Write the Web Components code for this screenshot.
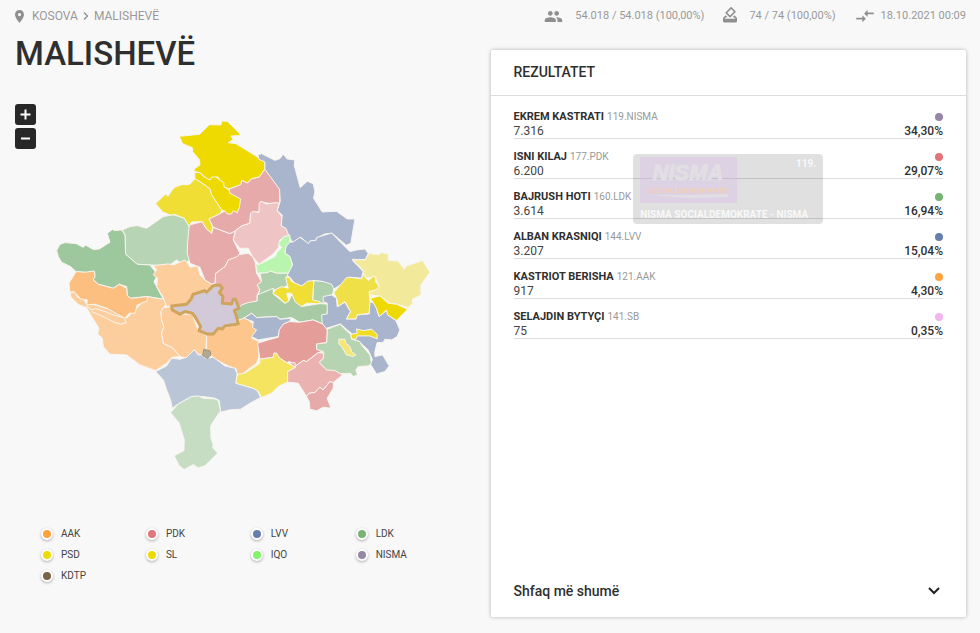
<!DOCTYPE html>
<html lang="sq">
<head>
<meta charset="utf-8">
<title>Malishevë – Rezultatet</title>
<style>
  html { height: 100%; }
  body { margin: 0; min-height: 100%; display: flex; background: #f8f8f8; color: #2f2f2f; font-family: Roboto, "Liberation Sans", sans-serif; font-size: 12px; }
</style>
</head>
<body>
<results-page></results-page>

<template id="t-page">
  <style>
    :host { flex: 1; display: flex; flex-direction: column; padding: 0 14px 16px 15px; min-width: 0; }
    main { flex: 1; display: grid; grid-template-columns: 1fr 1fr; }
    section { padding-right: 50px; }
    h1 { margin: 0 0 30px; font-size: 33px; line-height: 40px; font-weight: 500; }
    .map { display: flex; gap: 9px; margin-bottom: 52px; }
    region-map { flex: 1; }
  </style>
  <page-header></page-header>
  <main>
    <section>
      <h1>MALISHEVË</h1>
      <div class="map"><zoom-controls></zoom-controls><region-map></region-map></div>
      <party-legend></party-legend>
    </section>
    <results-card></results-card>
  </main>
</template>

<template id="t-header">
  <style>
    :host { display: flex; justify-content: space-between; padding: 6px 0 8px; line-height: 20px; color: #999; }
    nav, .stats, .stats span { display: flex; align-items: center; }
    nav { gap: 5px; }
    .stats { gap: 19px; font-size: 11px; }
    .stats span { gap: 12px; }
    .stats span:last-child { gap: 6px; }
    a { color: inherit; text-decoration: none; }
    svg { display: block; fill: #8f8f8f; }
    .pin { margin-right: 3px; }
  </style>
  <nav aria-label="Vendndodhja">
    <svg class="pin" width="9" height="13" viewBox="5 2 14 20" aria-hidden="true"><path d="M12 2C8.100 2 5 5.100 5 9c0 5.250 7 13 7 13s7-7.750 7-13c0-3.900-3.100-7-7-7zm0 9.500a2.500 2.500 0 1 1 0-5 2.500 2.500 0 0 1 0 5z"/></svg>
    <a href="#kosova">KOSOVA</a>
    <svg width="6" height="8" viewBox="0 0 6 8" aria-hidden="true"><path d="M1 0.500 4.500 4 1 7.500" fill="none" stroke="#8f8f8f" stroke-width="1.300"/></svg>
    <a href="#malisheve">MALISHEVË</a>
  </nav>
  <div class="stats">
    <span><svg width="19" height="19" viewBox="0 0 24 24" aria-hidden="true"><path d="M16 11c1.660 0 2.990-1.340 2.990-3S17.660 5 16 5s-3 1.340-3 3 1.340 3 3 3zm-8 0c1.660 0 2.990-1.340 2.990-3S9.660 5 8 5 5 6.340 5 8s1.340 3 3 3zm0 2c-2.330 0-7 1.170-7 3.500V19h14v-2.500C15 14.170 10.330 13 8 13zm8 0c-.29 0-.62.020-.97.050 1.160.84 1.970 1.970 1.970 3.450V19h6v-2.500c0-2.330-4.670-3.500-7-3.500z"/></svg>54.018 / 54.018 (100,00%)</span>
    <span><svg width="14" height="18" viewBox="3 2 18 23" aria-hidden="true"><path d="M18 13h-.68l-2 2h1.910L19 17H5l1.780-2h2.050l-2-2H6l-3 3v4c0 1.100.89 2 1.990 2H19a2 2 0 0 0 2-2v-4l-3-3zm-1-5.050-4.950 4.950-3.540-3.540 4.950-4.950L17 7.950zm-4.240-5.660L6.390 8.660a1 1 0 0 0 0 1.410l4.950 4.950c.39.39 1.020.39 1.410 0l6.360-6.360a1 1 0 0 0 0-1.410L14.160 2.300a.98.98 0 0 0-1.400-.01z"/></svg>74 / 74 (100,00%)</span>
    <span><svg width="20" height="14" viewBox="1 4 22 16" aria-hidden="true"><path d="M9.010 14H2v2h7.010v3L13 15l-3.990-4v3zm5.980-1v-3H22V8h-7.010V5L11 9l3.990 4z"/></svg>18.10.2021 00:09</span>
  </div>
</template>

<template id="t-zoom">
  <style>
    :host { display: flex; flex-direction: column; gap: 3px; width: 21px; }
    button { display: flex; align-items: center; justify-content: center; height: 21px; padding: 0; border: 0; border-radius: 3px; background: #282828; }
    svg { display: block; stroke: #fff; stroke-width: 2; fill: none; }
  </style>
  <button type="button" aria-label="Zmadho"><svg width="11" height="11" viewBox="0 0 11 11"><path d="M0.500 5.500h10M5.500 0.500v10"/></svg></button>
  <button type="button" aria-label="Zvogëlo"><svg width="11" height="11" viewBox="0 0 11 11"><path d="M1 5.500h9"/></svg></button>
</template>

<template id="t-map">
  <style>
    :host { display: block; min-width: 0; }
    svg { display: block; width: 100%; height: auto; stroke: #f8f5ee; stroke-width: 3; stroke-linejoin: round; }
  </style>
  <svg viewBox="135 312 1187 1110" role="img" aria-label="Harta e komunave">
    <g transform="translate(150 615)">
      <path fill="#b7d5b4" d="M217 75 240 65 262 62 290 70 340 35 370 29 403 40 418 64 418 100 412 120 418 150 432 165 415 168 400 180 380 165 355 183 300 180 262 178 227 148 225 90z"/>
      <path fill="#9dc79c" d="M20 137 30 118 45 113 78 116 100 127 107 120 130 134 148 132 180 112 172 85 188 73 192 77 215 75 225 90 227 148 262 178 300 180 323 210 312 230 340 283 292 275 242 280 232 272 230 245 208 238 190 250 145 238 130 225 135 205 78 200 62 185 35 172 25 155z"/>
    </g>
    <g transform="translate(255 780)">
      <path fill="#fdce9d" d="M-45 100 -30 95 -22 112 -5 118 5 132 25 134 75 148 100 160 125 175 160 140 187 110 235 118 245 130 235 145 228 155 230 180 237 200 230 220 235 250 265 265 287 290 262 292 245 310 212 332 165 315 125 285 75 283 55 260 52 235 38 222 42 205 20 170 5 143 -20 134 -42 112z"/>
      <path fill="none" d="M5 138 20 150 32 146 60 155 85 165 112 172 118 168M20 155 50 168 90 188 110 193 124 188 118 178"/>
      <path fill="#fdcd9c" d="M205 17 250 12 265 15 300 0 310 12 315 22 338 18 345 45 360 60 380 72 385 80 360 92 325 103 305 133 260 138 245 140 235 113 215 80 218 55 205 45 215 30z"/>
      <path fill="#fccc9a" d="M235 143 262 140 262 150 285 163 322 163 340 212 365 228 363 268 350 292 328 270 305 295 285 290 265 265 235 250 230 220 237 200 230 180 228 155z"/>
      <path fill="#fdc68d" d="M365 228 365 215 390 220 405 205 460 195 465 165 478 172 510 195 515 215 500 235 522 245 522 290 515 310 490 328 470 345 455 342 455 328 430 318 385 295 365 270z"/>
      <path fill="#ebb2b2" d="M385 75 390 70 392 40 420 20 430 0 455 -15 490 -20 503 -10 512 10 515 40 530 65 517 75 525 90 517 105 517 123 490 140 462 140 452 118 440 132 412 130 412 110 403 98 410 80 400 73z"/>
    </g>
    <path fill="#fdbf80" transform="translate(150 615)" d="M78 200 105 202 133 198 135 215 130 225 145 238 190 250 208 238 230 250 232 272 242 280 292 275 292 288 262 300 255 325 238 325 225 340 170 310 135 298 110 300 112 285 92 282 72 260 60 262 57 235z"/>
    <g transform="translate(450 330)">
      <path fill="#e7aaaa" d="M118 345 157 335 168 355 185 370 190 352 240 371 257 362 250 390 270 430 262 440 235 450 225 470 197 490 195 520 185 522 165 510 150 472 120 460 112 430 113 400z"/>
      <path fill="#e7aaaa" d="M237 237 272 224 276 211 293 219 305 206 328 201 345 177 389 231 390 280 355 280 331 275 328 305 302 310 300 340 275 348 257 362 240 371 190 352 177 327 210 311 225 303 240 295 240 250z"/>
      <path fill="#eed900" d="M88 79 149 73 178 44 213 45 216 33 232 34 270 71 270 77 243 78 250 88 235 98 258 101 345 155 345 177 328 201 305 206 293 219 276 211 272 224 237 237 222 230 212 212 203 200 175 210 160 197 150 188 132 184 133 177 150 165 149 150 128 125 127 113 98 101z"/>
      <path fill="#f0de34" d="M135 206 158 220 180 236 186 256 205 284 216 301 210 311 177 327 188 350 185 370 168 355 157 335 125 336 118 349 103 325 75 314 60 315 38 306 17 281 47 252 54 259 72 233 95 224 118 224z"/>
      <path fill="#eed900" d="M134 188 150 188 162 200 180 210 186 201 198 201 212 212 222 218 222 230 237 240 240 250 272 267 268 294 262 308 250 302 245 312 232 312 225 303 216 301 205 284 186 256 180 236 158 220 135 206z"/>
    </g>
    <g transform="translate(750 420)">
      <path fill="#eec4c4" d="M2 220 10 214 27 218 28 190 34 184 50 192 78 188 88 190 82 212 97 232 94 257 108 265 118 286 90 300 86 322 70 342 27 373 8 350 -5 325 -30 325 -50 300 -43 272 -25 258 0 250z"/>
      <path fill="#a9b5cd" d="M24 45 35 41 75 61 90 56 100 43 112 57 135 60 133 76 151 143 172 124 190 131 195 155 191 175 217 216 260 214 292 237 315 237 303 310 289 316 247 280 225 282 200 295 198 304 181 303 176 314 153 292 130 310 118 290 108 265 94 257 97 225 82 212 91 184 89 148 45 88 45 66 27 58z"/>
    </g>
    <g transform="translate(720 675)">
      <path fill="#a9b5cd" d="M148 50 158 52 180 37 206 56 210 48 228 46 230 38 275 24 318 68 330 80 350 75 375 72 385 85 377 103 338 107 370 140 365 160 330 157 310 175 282 192 250 170 222 167 205 172 185 183 165 175 150 157 140 150 158 120 150 95 135 85 138 65z"/>
      <path fill="#b9f5ae" d="M150 30 130 36 125 45 115 55 125 68 110 85 105 95 55 120 47 115 52 145 85 143 90 138 110 145 145 145 158 120 150 95 135 85 138 65 150 52z"/>
      <path fill="#aed0ac" d="M60 145 85 143 90 138 110 145 145 145 140 160 150 175 130 190 100 195 75 200 52 215 60 195 52 180 65 170z"/>
      <path fill="#aed0ac" d="M222 167 250 170 275 178 282 192 278 208 255 218 258 235 218 232z"/>
      <path fill="#a8cba6" d="M-15 260 5 240 25 233 52 228 52 210 100 190 100 207 135 235 147 228 155 210 185 245 240 236 265 238 262 268 248 270 248 297 220 285 180 292 155 278 120 283 110 275 50 278 35 265 12 280 -5 285z"/>
      <path fill="#f0de34" d="M137 157 148 157 155 170 185 183 205 168 222 168 218 225 240 230 240 236 200 235 185 245 165 230 155 205 140 205 147 228 135 235 115 215 100 207 105 195 125 185 145 190z"/>
      <path fill="#a9b5cd" d="M12 280 35 265 50 278 110 275 120 283 155 280 148 290 130 298 118 318 115 335 85 340 55 345 35 335 50 315 38 308 40 290z"/>
    </g>
    <g transform="translate(960 720)">
      <path fill="#a9b5cd" d="M10 170 35 165 50 175 52 200 75 187 92 215 80 237 108 237 112 225 148 222 150 185 165 190 178 230 200 212 205 225 228 242 240 270 232 290 215 300 195 298 190 308 172 308 165 335 165 350 188 345 208 378 195 395 170 402 150 370 158 360 145 330 115 303 95 298 95 280 82 270 62 252 20 265 8 265 5 225 22 222 22 190 10 185z"/>
      <path fill="#f2e99b" d="M97 58 135 60 148 40 175 45 185 38 205 42 205 62 235 63 253 88 260 78 308 62 330 97 303 135 303 165 278 178 278 190 265 203 232 193 210 190 180 168 148 165 150 155 165 150 178 140 165 110 140 115 130 100 130 92z"/>
      <path fill="#f0e048" d="M42 158 80 113 90 112 125 117 130 103 145 122 160 110 168 112 167 125 178 140 168 150 148 155 150 185 148 220 112 225 108 237 80 237 92 215 75 185 55 200 52 180z"/>
      <path fill="#eed900" d="M152 175 180 168 205 190 230 193 263 208 230 242 203 225 200 210 178 230 170 205z"/>
      <path fill="#f0dc22" d="M92 283 112 280 110 267 130 272 155 268 172 283 172 297 150 288 112 288 108 298 95 297z"/>
      <path fill="#b6d4b2" d="M22 268 60 253 82 275 92 283 95 298 120 305 125 315 150 345 155 370 145 378 115 380 108 390 113 405 100 410 92 400 40 403 20 390 -2 368 10 355 10 335 -10 330 -10 312 20 308z"/>
      <path fill="#f3e674" d="M57 298 75 298 78 310 90 320 95 335 108 345 100 350 80 345 65 320 57 312z"/>
    </g>
    <g transform="translate(450 990)">
      <path fill="#e59d99" d="M323 40 355 30 385 22 388 0 400 -17 418 -25 450 -23 490 -30 518 -18 532 0 530 38 500 42 500 58 520 68 505 68 470 95 460 92 437 108 420 95 410 98 385 82 380 70 372 70 370 82 330 88z"/>
      <path fill="#ebb2b2" d="M415 100 435 98 437 108 460 92 470 95 505 68 522 70 520 85 508 98 530 120 555 122 578 135 550 158 540 155 520 180 510 172 495 188 478 190 470 200 445 160 413 157 413 125 437 112z"/>
      <path fill="#e7aaaa" d="M470 200 478 190 495 188 510 172 520 180 540 155 551 158 550 175 532 205 543 235 520 232 500 243 480 238 478 215z"/>
      <path fill="#bac6d8" d="M17 125 50 108 65 85 90 88 110 82 133 60 145 75 155 75 165 85 190 82 225 108 255 115 262 133 258 160 320 178 332 203 300 220 272 238 240 240 212 247 208 212 195 205 160 200 125 200 85 222 67 235 62 210 52 185 40 150z"/>
      <path fill="#c6dcc3" d="M62 248 85 222 125 200 145 198 160 205 195 207 205 212 212 243 190 275 182 290 183 325 190 345 188 352 203 370 165 408 145 414 130 404 103 419 88 408 73 378 102 362 103 330 88 280z"/>
      <path fill="#f4e45f" d="M262 133 285 130 330 100 330 88 370 82 372 70 380 70 390 85 410 98 437 112 413 125 413 157 385 170 365 190 335 203 325 185 310 175 258 160z"/>
      <path fill="#b2a894" stroke="#9c937c" d="M162 58 180 63 183 75 172 86 158 77z"/>
    </g>
    <path fill="#d2cad8" stroke="#cfa45c" stroke-width="9" transform="translate(255 780)" d="M260 138 305 133 318 118 325 103 360 92 365 97 385 77 405 75 412 85 403 98 414 110 412 130 440 132 445 118 452 118 462 145 448 152 455 170 460 192 420 198 412 207 400 205 385 222 365 222 342 212 347 200 330 170 322 160 300 155 285 163 262 150z"/>
  </svg>
</template>

<template id="t-legend">
  <style>
    :host { display: block; margin-left: 26px; }
    ul { display: grid; grid-template-columns: repeat(4, 1fr); row-gap: 5px; list-style: none; margin: 0 -20px 0 0; padding: 0; }
  </style>
  <ul></ul>
</template>

<template id="t-legend-item">
  <style>
    :host { display: flex; align-items: center; gap: 8px; font-size: 10px; line-height: 16px; color: #444; }
    i { box-sizing: border-box; width: 12px; height: 12px; border: 2px solid #fff; border-radius: 50%; background: var(--dot); box-shadow: 0 1px 3px rgba(0,0,0,.3); }
  </style>
  <i></i><slot></slot>
</template>

<template id="t-card">
  <style>
    :host { position: relative; display: flex; flex-direction: column; margin-top: 16px; background: #fff; border-radius: 2px; box-shadow: 0 0 4px rgba(0,0,0,.28); }
    h2 { margin: 0; padding: 12px 23px 13px; border-bottom: 1px solid #ddd; font-size: 14px; line-height: 20px; font-weight: 500; }
    .rows { flex: 1; padding: 3px 23px 0; }
    button { display: flex; justify-content: space-between; align-items: center; padding: 16px 26px 16px 23px; border: 0; background: none; color: inherit; font: 500 14px/20px Roboto, "Liberation Sans", sans-serif; }
    party-tooltip { position: absolute; left: 30%; top: 104px; }
  </style>
  <h2>REZULTATET</h2>
  <div class="rows"></div>
  <button type="button">Shfaq më shumë <svg width="12" height="8" viewBox="0 0 12 8" aria-hidden="true"><path d="M1 1l5 5 5-5" fill="none" stroke="#222" stroke-width="2"/></svg></button>
  <party-tooltip></party-tooltip>
</template>

<template id="t-row">
  <style>
    :host { display: grid; grid-template-columns: 1fr auto; grid-template-rows: 15px 14px; align-items: center; padding-top: 10px; border-bottom: 1px solid #ddd; line-height: 14px; }
    b { font-size: 11px; font-weight: 700; }
    small { font-size: 10px; color: #999; }
    i { justify-self: end; width: 8px; height: 8px; border-radius: 50%; background: var(--dot); }
    .votes { color: #444; }
    .share { font-weight: 500; }
  </style>
  <div><b><slot></slot></b> <small></small></div><i></i>
  <span class="votes"></span><span class="share"></span>
</template>

<template id="t-tooltip">
  <style>
    :host { box-sizing: border-box; display: grid; grid-template-columns: auto 1fr; width: 190px; padding: 3px 7px 2px; border-radius: 4px; background: rgba(0,0,0,.12); color: rgba(255,255,255,.8); font-size: 10px; font-weight: 700; }
    .logo { width: 97px; height: 46px; display: block; background: rgba(214,190,232,.4); }
    .no { justify-self: end; line-height: 14px; }
    .name { grid-column: 1 / 3; padding-top: 4px; line-height: 15px; white-space: nowrap; }
  </style>
  <svg class="logo" viewBox="0 0 97 46" role="img" aria-label="NISMA">
    <text x="48" y="23" text-anchor="middle" font-family="Liberation Sans, sans-serif" font-weight="700" font-style="italic" font-size="22" fill="#e2dfe4" stroke="#e2dfe4">NISMA</text>
    <text x="48" y="36" text-anchor="middle" font-family="Liberation Sans, sans-serif" font-weight="700" font-style="italic" font-size="8" fill="#f1cdb4">SOCIALDEMOKRATE</text>
    <path d="M10 38h40l38-1v3L50 41z" fill="#e2dfe4"/>
  </svg>
  <span class="no">119.</span>
  <span class="name">NISMA SOCIALDEMOKRATE - NISMA</span>
</template>

<script>
  const stamp = (host, id) => {
    const root = host.attachShadow({ mode: 'open' });
    root.append(document.getElementById(id).content.cloneNode(true));
    return root;
  };
  const simple = (name, id) => customElements.define(name, class extends HTMLElement {
    constructor() { super(); stamp(this, id); }
  });

  simple('party-tooltip', 't-tooltip');
  simple('zoom-controls', 't-zoom');
  simple('region-map', 't-map');
  simple('page-header', 't-header');
  simple('legend-item', 't-legend-item');

  customElements.define('result-row', class extends HTMLElement {
    constructor() { super(); this.root = stamp(this, 't-row'); }
    connectedCallback() {
      this.root.querySelector('small').textContent = this.getAttribute('party');
      this.root.querySelector('.votes').textContent = this.getAttribute('votes');
      this.root.querySelector('.share').textContent = this.getAttribute('share');
    }
  });

  customElements.define('party-legend', class extends HTMLElement {
    constructor() {
      super();
      const list = stamp(this, 't-legend').querySelector('ul');
      for (const [label, color] of [
        ['AAK', '#ffa341'], ['PDK', '#e0757a'], ['LVV', '#657eac'], ['LDK', '#77b372'],
        ['PSD', '#eedb0a'], ['SL', '#eed900'], ['IQO', '#84f26c'], ['NISMA', '#9787a7'], ['KDTP', '#776345']
      ]) {
        const li = document.createElement('li');
        const item = document.createElement('legend-item');
        item.style.setProperty('--dot', color);
        item.textContent = label;
        li.append(item);
        list.append(li);
      }
    }
  });

  customElements.define('results-card', class extends HTMLElement {
    constructor() {
      super();
      const rows = stamp(this, 't-card').querySelector('.rows');
      for (const [name, party, votes, share, color] of [
        ['EKREM KASTRATI', '119.NISMA', '7.316', '34,30%', '#9787a7'],
        ['ISNI KILAJ', '177.PDK', '6.200', '29,07%', '#e0757a'],
        ['BAJRUSH HOTI', '160.LDK', '3.614', '16,94%', '#77b372'],
        ['ALBAN KRASNIQI', '144.LVV', '3.207', '15,04%', '#657eac'],
        ['KASTRIOT BERISHA', '121.AAK', '917', '4,30%', '#ffa341'],
        ['SELAJDIN BYTYÇI', '141.SB', '75', '0,35%', '#f1b4ee']
      ]) {
        const row = document.createElement('result-row');
        row.setAttribute('party', party);
        row.setAttribute('votes', votes);
        row.setAttribute('share', share);
        row.style.setProperty('--dot', color);
        row.textContent = name;
        rows.append(row);
      }
    }
  });

  simple('results-page', 't-page');
</script>
</body>
</html>
